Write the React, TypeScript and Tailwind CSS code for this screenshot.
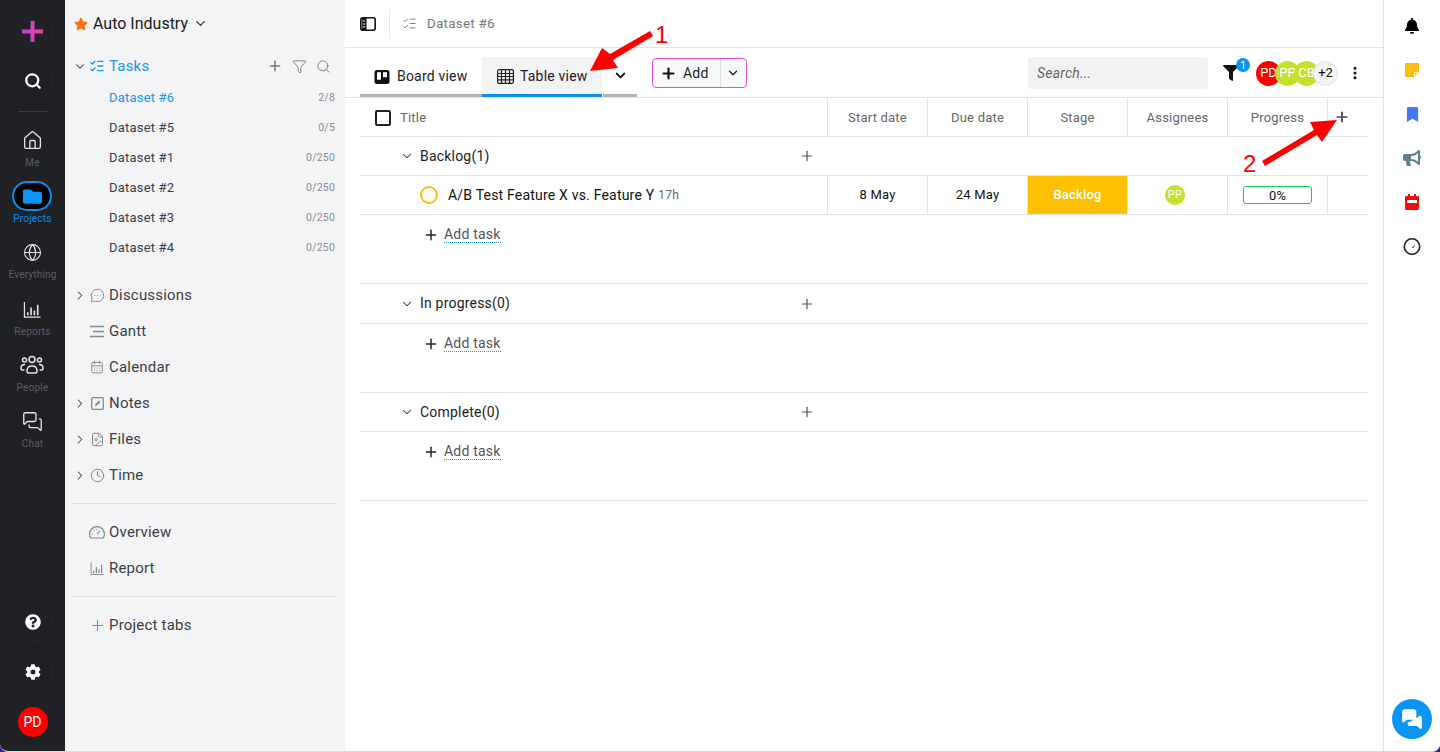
import type { ReactNode } from "react";
import {
  ChevronDown,
  ChevronRight,
  Plus,
  Search,
  Home,
  Globe,
  Filter,
  ListChecks,
  CalendarDays,
  FileImage,
  Clock,
  MessageCircleMore,
  MessagesSquare,
  EllipsisVertical,
} from "lucide-react";
import {
  FaStar,
  FaFolder,
  FaQuestionCircle,
  FaBell,
  FaBookmark,
  FaBullhorn,
  FaFilter,
  FaCog,
} from "react-icons/fa";

const datasets = [
  { name: "Dataset #6", count: "2/8", active: true },
  { name: "Dataset #5", count: "0/5" },
  { name: "Dataset #1", count: "0/250" },
  { name: "Dataset #2", count: "0/250" },
  { name: "Dataset #3", count: "0/250" },
  { name: "Dataset #4", count: "0/250" },
];

function BarsIcon({ size, stroke }: { size: number; stroke: string }) {
  return (
    <svg width={size} height={size} viewBox="0 0 20 20" fill="none" stroke={stroke}>
      <path d="M1.500 2v16h17" strokeWidth="1.300" />
      <path d="M5 16v-3M8.500 16V8M12 16v-5M15.500 16V5" strokeWidth="1.700" />
    </svg>
  );
}

function PeopleIcon() {
  return (
    <svg width="24" height="20" viewBox="0 0 24 20" fill="none" stroke="#e5e5e5" strokeWidth="1.500">
      <circle cx="12" cy="4.500" r="3" />
      <circle cx="4.500" cy="5" r="2" />
      <circle cx="19.500" cy="5" r="2" />
      <path d="M7 16c0-3 2-5 5-5s5 2 5 5v.5c0 .8-.7 1.500-1.500 1.500h-7C7.700 18 7 17.300 7 16.500z" />
      <path d="M4.500 15H2.500C1.500 15 1 14 1 13c0-2 1.500-3.500 4-3.500M19.500 15h2c1 0 1.500-1 1.500-2 0-2-1.500-3.500-4-3.500" />
    </svg>
  );
}

function RailItem({ label, icon, active }: { label: string; icon: ReactNode; active?: boolean }) {
  return (
    <div className="flex h-14 flex-col items-center">
      <div className="flex h-[30px] items-center justify-center">{icon}</div>
      <span className={`mt-[1px] text-[10px] leading-[14px] tracking-[0.2px] ${active ? "text-[#0a8fef]" : "text-[#5c5f63]"}`}>{label}</span>
    </div>
  );
}

function SideItem({ label, icon, arrow }: { label: string; icon: ReactNode; arrow?: boolean }) {
  return (
    <div className="flex h-9 items-center text-[15px] tracking-[0.2px] text-[#3c3f44]">
      <div className="flex w-[14px] justify-center">
        {arrow && <ChevronRight size={15} strokeWidth={1.8} className="text-[#444]" />}
      </div>
      <div className="flex w-[20px] justify-center text-[#85888c]">{icon}</div>
      <span className="ml-[2px]">{label}</span>
    </div>
  );
}

function Sidebar() {
  return (
    <aside className="flex w-[280px] shrink-0 flex-col bg-[#f3f4f6] pl-[8px] pr-[10px]">
      <div className="flex h-[47px] items-center pl-[1px]">
        <FaStar size={14} className="text-[#f97316]" />
        <span className="ml-[5px] text-[16px] text-[#1a1a1a]">Auto Industry</span>
        <ChevronDown size={15} className="ml-[5px] text-[#333]" />
      </div>
      <div className="mt-[4px] flex h-[30px] items-center text-[#1a94f0]">
        <div className="flex w-[14px] justify-center">
          <ChevronDown size={15} strokeWidth={1.8} className="text-[#444]" />
        </div>
        <div className="flex w-[20px] justify-center">
          <ListChecks size={16} />
        </div>
        <span className="ml-[2px] text-[15px] tracking-[0.2px]">Tasks</span>
        <div className="ml-auto flex items-center gap-[9px] text-[#777]">
          <Plus size={16} strokeWidth={2.2} />
          <Filter size={15} strokeWidth={1.5} />
          <Search size={15} strokeWidth={1.5} className="mr-[4px]" />
        </div>
      </div>
      <div className="mt-[2px]">
        {datasets.map((d) => (
          <div key={d.name} className="flex h-[30px] items-center pl-[36px]">
            <span className={`text-[13px] tracking-[0.2px] ${d.active ? "text-[#1a94f0]" : "text-[#3c3f44]"}`}>{d.name}</span>
            <span className="ml-auto text-[10.5px] tracking-[0.2px] text-[#8a8d91]">{d.count}</span>
          </div>
        ))}
      </div>
      <div className="mt-[14px]">
        <SideItem arrow label="Discussions" icon={<MessageCircleMore size={15} strokeWidth={1.5} />} />
        <SideItem
          label="Gantt"
          icon={
            <svg width="15" height="13" viewBox="0 0 15 13" stroke="currentColor" strokeWidth="1.400">
              <path d="M0 1.500h14M3 6.500h11M0 11.500h14" />
            </svg>
          }
        />
        <SideItem label="Calendar" icon={<CalendarDays size={14} strokeWidth={1.6} />} />
        <SideItem
          arrow
          label="Notes"
          icon={
            <svg width="13" height="13" viewBox="0 0 13 13" fill="none">
              <rect x="0.700" y="0.700" width="11.600" height="11.600" rx="1" stroke="currentColor" strokeWidth="1.300" />
              <path d="M4 9l.500-2L8 3.500 9.500 5 6 8.500z" fill="currentColor" />
            </svg>
          }
        />
        <SideItem arrow label="Files" icon={<FileImage size={15} strokeWidth={1.6} />} />
        <SideItem arrow label="Time" icon={<Clock size={15} strokeWidth={1.6} />} />
      </div>
      <div className="mt-[10px] border-t border-[#d9dbde] pt-[10px]">
        <SideItem
          label="Overview"
          icon={
            <svg width="16" height="13" viewBox="0 0 16 13" fill="none" stroke="currentColor" strokeWidth="1.200">
              <path d="M2 12h12c1-1 1.400-2.500 1.400-4A7.400 7.400 0 0 0 .6 8c0 1.500.4 3 1.400 4z" />
              <path d="M8 8.500l3-4M3 8h1M5 4.500l.5.5M8 3v1" />
            </svg>
          }
        />
        <SideItem label="Report" icon={<BarsIcon size={15} stroke="#85888c" />} />
      </div>
      <div className="mt-[10px] border-t border-[#d9dbde] pt-[10px]">
        <SideItem label="Project tabs" icon={<Plus size={17} strokeWidth={1.5} />} />
      </div>
    </aside>
  );
}

function LeftRail() {
  return (
    <nav className="flex w-[65px] shrink-0 flex-col items-center bg-[#1f2125] pb-[14px] pt-[11px]">
      <div className="flex h-10 w-10 items-center justify-center rounded-full border border-[#26282c]">
        <svg width="21" height="21" viewBox="0 0 21 21">
          <defs>
            <linearGradient id="plusGrad" x1="0" x2="1" y1="0" y2="0">
              <stop offset="0" stopColor="#c93fe0" />
              <stop offset="1" stopColor="#f03fa8" />
            </linearGradient>
          </defs>
          <path d="M8.500 0h4v8.500H21v4h-8.500V21h-4v-8.500H0v-4h8.500z" fill="url(#plusGrad)" />
        </svg>
      </div>
      <div className="mt-[10px] flex h-10 w-10 items-center justify-center rounded-full border border-[#26282c]">
        <Search size={18} strokeWidth={3} className="text-white" />
      </div>
      <div className="mt-[10px] h-px w-[30px] bg-[#3a3c40]" />
      <div className="mt-[13px]">
        <RailItem label="Me" icon={<Home size={21} strokeWidth={1.5} className="text-[#e5e5e5]" />} />
        <RailItem
          active
          label="Projects"
          icon={
            <div className="flex h-[30px] w-[40px] items-center justify-center rounded-full border-2 border-[#0a8fef] bg-black">
              <FaFolder size={19} className="text-[#0a94f6]" />
            </div>
          }
        />
        <RailItem label="Everything" icon={<Globe size={19} strokeWidth={1.4} className="text-[#e5e5e5]" />} />
        <div className="h-px" />
        <RailItem label="Reports" icon={<BarsIcon size={19} stroke="#e5e5e5" />} />
        <RailItem label="People" icon={<PeopleIcon />} />
        <RailItem label="Chat" icon={<MessagesSquare size={21} strokeWidth={1.5} className="text-[#e5e5e5]" />} />
      </div>
      <div className="mt-auto flex h-10 w-10 items-center justify-center rounded-full border border-[#26282c]">
        <FaQuestionCircle size={16} className="text-white" />
      </div>
      <div className="mt-[10px] flex h-10 w-10 items-center justify-center rounded-full border border-[#26282c]">
        <FaCog size={16} className="text-white" />
      </div>
      <div className="mt-[15px] flex h-[30px] w-[30px] items-center justify-center rounded-full bg-[#fe0000] text-[14px] text-white">
        PD
      </div>
    </nav>
  );
}

function GroupRows({ name, headerClass = "h-[39px]", children }: { name: string; headerClass?: string; children?: ReactNode }) {
  return (
    <div className="border-b border-[#e3e4e6] pb-[29px]">
      <div className={`flex items-center border-b border-[#e3e4e6] ${headerClass}`}>
        <div className="flex h-[38px] w-[467px] items-center pl-[40px]">
          <ChevronDown size={14} strokeWidth={1.8} className="text-[#333]" />
          <span className="ml-[6px] text-[14px] tracking-[0.2px] text-[#222]">{name}</span>
          <Plus size={16} strokeWidth={1.8} className="ml-auto mr-[12px] text-[#555]" />
        </div>
      </div>
      {children}
      <div className="flex h-[39px] items-center pl-[63px]">
        <Plus size={16} strokeWidth={2.2} className="text-[#222]" />
        <span className="ml-[5px] border-b border-dotted border-[#1a94f0] text-[14px] leading-[15px] tracking-[0.2px] text-[#555]">Add task</span>
      </div>
    </div>
  );
}

function Cell({ children, className = "w-[100px] justify-center" }: { children?: ReactNode; className?: string }) {
  return (
    <div className={`flex h-full shrink-0 items-center border-l border-[#e3e4e6] ${className}`}>
      {children}
    </div>
  );
}

function Main() {
  return (
    <main className="flex min-w-0 flex-1 flex-col bg-white">
      <div className="flex h-[48px] shrink-0 items-center border-b border-[#e3e4e6] pl-[15px]">
        <svg width="16" height="16" viewBox="0 0 16 16">
          <rect x="0.800" y="1.800" width="14.400" height="12.400" rx="2" fill="none" stroke="#111" strokeWidth="1.600" />
          <path d="M2 2h4.600v12H2z" fill="#111" />
          <path d="M2.600 5h2.600M2.600 8h2.600M2.600 11h2.600" stroke="#fff" strokeWidth="1" />
        </svg>
        <div className="ml-[13px] h-[30px] w-px bg-[#e7e8ea]" />
        <ListChecks size={15} strokeWidth={1.5} className="ml-[12px] text-[#777]" />
        <span className="ml-[10px] text-[13.5px] tracking-[0.2px] text-[#77797d]">Dataset #6</span>
      </div>
      <div className="flex h-[50px] shrink-0 items-end border-b border-[#e3e4e6] pl-[15px] pr-[15px]">
        <div className="flex h-[40px] w-[122px] items-center border-b-[3px] border-[#b3b3b3] pl-[14px] pt-[2px]">
          <svg width="16" height="16" viewBox="0 0 16 16">
            <rect x="0.500" y="1" width="15" height="14" rx="2.500" fill="#111" />
            <rect x="3" y="3.200" width="4" height="7.500" fill="#fff" />
            <rect x="9" y="3.200" width="4" height="5" fill="#fff" />
          </svg>
          <span className="ml-[7px] text-[14px] tracking-[0.2px] text-[#222]">Board view</span>
        </div>
        <div className="flex h-[40px] w-[120px] items-center border-b-[3px] border-[#0a8fef] bg-[#f1f3f5] pl-[15px] pt-[2px]">
          <svg width="17" height="15" viewBox="0 0 17 15" fill="none" stroke="#222" strokeWidth="1.200">
            <rect x="0.600" y="0.600" width="15.800" height="13.800" rx="1.500" />
            <path d="M.6 4.500h15.800M.6 7.500h15.800M.6 10.800h15.800M4.500 .6v13.800M8.500 .6v13.800M12.500 .6v13.800" />
          </svg>
          <span className="ml-[6px] text-[14px] tracking-[0.2px] text-[#222]">Table view</span>
        </div>
        <div className="ml-[1px] flex h-[40px] w-[34px] items-center justify-center border-b-[3px] border-[#b3b3b3]">
          <ChevronDown size={15} strokeWidth={3.2} className="text-[#111]" />
        </div>
        <div className="mb-[9px] ml-[15px] flex h-[30px] w-[95px] items-center rounded-[4px] border border-[#e84fd8] bg-[#f7f8f9]">
          <Plus size={17} strokeWidth={3} className="ml-[7px] text-[#111]" />
          <span className="ml-[6px] text-[14px] tracking-[0.2px] text-[#222]">Add</span>
          <div className="ml-[11px] flex h-full flex-1 items-center justify-center border-l border-[#dcdde0]">
            <ChevronDown size={14} strokeWidth={2.2} className="text-[#222]" />
          </div>
        </div>
        <div className="mb-[8px] ml-auto flex items-center">
          <div className="flex h-[32px] w-[180px] items-center rounded-[4px] bg-[#f2f2f2] pl-[9px] text-[14px] italic tracking-[0.2px] text-[#666]">
            Search...
          </div>
          <div className="relative ml-[15px] flex w-[16px] justify-center">
            <FaFilter size={16} className="text-[#111]" />
            <span className="absolute -right-[11px] -top-[7px] flex h-[14px] w-[14px] items-center justify-center rounded-full bg-[#0a94f6] text-[10px] text-white">1</span>
          </div>
          <div className="ml-[17px] flex text-[13px] text-white">
            <span className="flex h-[25px] w-[25px] items-center justify-center rounded-full bg-[#fe0000]">PD</span>
            <span className="-ml-[6px] flex h-[25px] w-[25px] items-center justify-center rounded-full bg-[#c5e02c]">PP</span>
            <span className="-ml-[6px] flex h-[25px] w-[25px] items-center justify-center rounded-full bg-[#c5e02c]">CB</span>
            <span className="-ml-[6px] flex h-[25px] w-[25px] items-center justify-center rounded-full border border-[#e3e4e6] bg-[#f2f3f5] text-[#111]">+2</span>
          </div>
          <EllipsisVertical size={16} strokeWidth={2.6} className="ml-[9px] mr-[5px] text-[#111]" />
        </div>
      </div>

      <div className="px-[15px]">
        <div className="flex h-[39px] items-center border-b border-[#e3e4e6] text-[13px] tracking-[0.2px] text-[#666]">
          <div className="flex w-[467px] items-center pl-[15px] pt-[1px]">
            <span className="h-[16px] w-[16px] rounded-[2px] border-2 border-[#222]" />
            <span className="ml-[9px]">Title</span>
          </div>
          <Cell className="w-[100px] justify-center pt-[1px]">Start date</Cell>
          <Cell className="w-[100px] justify-center pt-[1px]">Due date</Cell>
          <Cell className="w-[100px] justify-center pt-[1px]">Stage</Cell>
          <Cell className="w-[100px] justify-center pt-[1px]">Assignees</Cell>
          <Cell className="w-[100px] justify-center pt-[1px]">Progress</Cell>
          <Cell className="w-[41px] justify-start pl-[6px]">
            <Plus size={16} strokeWidth={2.6} className="text-[#444]" />
          </Cell>
        </div>

        <GroupRows name="Backlog(1)">
          <div className="flex h-[39px] items-center border-b border-[#e3e4e6] text-[13px] tracking-[0.2px] text-[#111]">
            <div className="flex w-[467px] items-center pl-[60px]">
              <span className="h-[18px] w-[18px] rounded-full border-2 border-[#fdbe10]" />
              <span className="ml-[10px] text-[14px]">A/B Test Feature X vs. Feature Y</span>
              <span className="ml-[4px] text-[12px] text-[#666]">17h</span>
            </div>
            <Cell>8 May</Cell>
            <Cell>24 May</Cell>
            <Cell className="w-[100px] justify-center bg-[#ffc000] font-medium text-white">Backlog</Cell>
            <Cell>
              <span className="-ml-[5px] flex h-5 w-5 items-center justify-center rounded-full bg-[#c5e02c] text-[11px] text-white">PP</span>
            </Cell>
            <Cell>
              <span className="flex h-[18px] w-[69px] items-center justify-center rounded-[3px] border border-[#1fc45a] text-[13px] leading-none">0%</span>
            </Cell>
            <Cell className="w-[41px]" />
          </div>
        </GroupRows>
        <GroupRows name="In progress(0)" headerClass="h-[40px]" />
        <GroupRows name="Complete(0)" />
      </div>
    </main>
  );
}

function RightRail() {
  return (
    <aside className="flex w-[57px] shrink-0 flex-col items-center border-l border-[#e3e4e6] bg-white pt-[4px]">
      <div className="flex h-[44px] items-center"><FaBell size={16} className="text-black" /></div>
      <div className="flex h-[44px] items-center">
        <svg width="14" height="14" viewBox="0 0 14 14">
          <path d="M0 1C0 .5.500 0 1 0h12c.5 0 1 .5 1 1v8l-5 5H1c-.5 0-1-.5-1-1z" fill="#fdbe10" />
          <path d="M9.500 13V9.500H13" fill="none" stroke="#fff" strokeWidth="1" />
        </svg>
      </div>
      <div className="flex h-[44px] items-center"><FaBookmark size={15} className="text-[#4479f6]" /></div>
      <div className="flex h-[44px] items-center"><FaBullhorn size={18} className="text-[#5f7f92]" /></div>
      <div className="flex h-[44px] items-center">
        <svg width="14" height="16" viewBox="0 0 14 16">
          <path d="M3 0h2v2h4V0h2v2h1.500c.8 0 1.500.7 1.500 1.500v11c0 .8-.7 1.500-1.500 1.500h-11C.7 16 0 15.300 0 14.500v-11C0 2.700.700 2 1.500 2H3z" fill="#ee0f0f" />
          <rect x="2" y="6" width="10" height="3" fill="#fff" />
        </svg>
      </div>
      <div className="flex h-[44px] items-center">
        <svg width="18" height="18" viewBox="0 0 17 17" fill="none">
          <circle cx="8.500" cy="9" r="7.300" stroke="#222" strokeWidth="1.500" />
          <path d="M5.500 8l3 1.800 3.500-3.300-2.600 4.200z" fill="#222" />
        </svg>
      </div>
      <div className="mb-[12px] mt-auto flex h-10 w-10 items-center justify-center rounded-full bg-[#0a94f6]">
        <MessagesSquare size={22} fill="white" strokeWidth={1.5} className="text-white" />
      </div>
    </aside>
  );
}

function Annotations() {
  return (
    <>
      <svg className="pointer-events-none absolute left-[580px] top-[25px]" width="80" height="50" viewBox="0 0 80 50">
        <path d="M70 6L30 29l-8-6-12 23 28-3-5-8 40-24z" fill="#fe0000" />
      </svg>
      <span className="pointer-events-none absolute left-[655px] top-[21px] font-['Liberation_Sans'] text-[24px] leading-[28px] text-[#fe0000]">1</span>
      <svg className="pointer-events-none absolute left-[1255px] top-[105px]" width="90" height="65" viewBox="0 0 90 65">
        <path d="M7 56l52-31-4-8 27-2-15 22-5-7-52 31z" fill="#fe0000" />
      </svg>
      <span className="pointer-events-none absolute left-[1243px] top-[150px] font-['Liberation_Sans'] text-[24px] leading-[28px] text-[#fe0000]">2</span>
    </>
  );
}

export default function App() {
  return (
    <div className="h-[752px] w-[1440px] overflow-hidden bg-[#4a148c] font-['Roboto',sans-serif]">
      <div className="relative flex h-[752px] overflow-hidden rounded-b-[8px] border-b border-[#d9dbde] bg-white">
        <LeftRail />
        <Sidebar />
        <Main />
        <RightRail />
        <Annotations />
      </div>
    </div>
  );
}
